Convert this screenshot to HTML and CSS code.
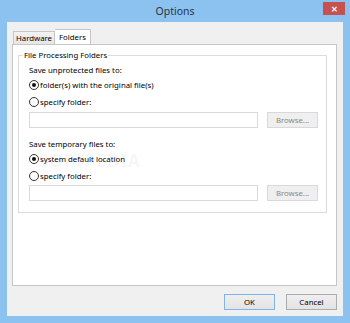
FILE: index.html
```html
<!DOCTYPE html>
<html>
<head>
    <title>Options</title>
    <link rel="stylesheet" href="styles.css">
</head>
<body>
    <div class="window">
        <div class="titlebar">
            <span class="title">Options</span>
            <span class="close">&#x2715;</span>
        </div>
        <div class="client">
            <div class="tabs">
                <div class="tab">Hardware</div>
                <div class="tab active">Folders</div>
            </div>
            <div class="panel">
                <fieldset class="group">
                    <legend>File Processing Folders</legend>
                    <div class="label">Save unprotected files to:</div>
                    <div class="radio"><span class="dot checked"></span>folder(s) with the original file(s)</div>
                    <div class="radio"><span class="dot"></span>specify folder:</div>
                    <div class="pathrow">
                        <div class="textbox"></div>
                        <div class="browse">Browse...</div>
                    </div>
                    <div class="label second">Save temporary files to:</div>
                    <div class="radio"><span class="dot checked"></span>system default location</div>
                    <div class="radio"><span class="dot"></span>specify folder:</div>
                    <div class="pathrow last">
                        <div class="textbox"></div>
                        <div class="browse">Browse...</div>
                    </div>
                </fieldset>
                <div class="watermark">SOFTPEDIA</div>
            </div>
            <div class="buttons">
                <div class="button default">OK</div>
                <div class="button">Cancel</div>
            </div>
        </div>
    </div>
</body>
</html>
```
FILE: styles.css
```css
body {
    margin: 0;
    font-family: 'Noto Sans', 'Open Sans', sans-serif;
    font-size: 7.8px;
    color: #000;
}

.window {
    width: 350px;
    height: 323px;
    box-sizing: border-box;
    background-color: #8cc2f0;
    padding: 0 7px 7px 7px;
    display: flex;
    flex-direction: column;
}

.titlebar {
    position: relative;
    height: 22px;
    display: flex;
    align-items: center;
    justify-content: center;
}

.title {
    font-size: 10.5px;
    color: #2b3543;
    margin-top: -1px;
}

.close {
    position: absolute;
    right: -2px;
    top: 2px;
    width: 22px;
    height: 13px;
    background-color: #c75050;
    color: #fff;
    font-size: 8px;
    font-weight: bold;
    display: flex;
    align-items: center;
    justify-content: center;
}

.client {
    flex: 1;
    background-color: #f0f0f0;
    padding: 7px 6px 5px 5px;
    display: flex;
    flex-direction: column;
}

.tabs {
    display: flex;
    align-items: flex-end;
    height: 15px;
    padding-left: 1px;
}

.tab {
    width: 40px;
    height: 12px;
    line-height: 12px;
    text-align: center;
    border: 1px solid #c6c6c6;
    border-bottom: none;
    background: linear-gradient(#f2f2f2, #e6e6e6);
}

.tab.active {
    width: 35px;
    height: 15px;
    line-height: 14px;
    background: #fff;
    border-left: none;
    margin-bottom: -1px;
    position: relative;
}

.panel {
    position: relative;
    height: 242px;
    box-sizing: border-box;
    background-color: #fff;
    border: 1px solid #c6c6c6;
    padding: 4px 9px 0 5px;
}

.group {
    margin: 0;
    border: 1px solid #dcdcdc;
    padding: 3px 8px 11px 10px;
}

.group legend {
    margin-left: -6px;
    padding: 0 1px;
    line-height: 12px;
}

.label {
    height: 12px;
    line-height: 12px;
}

.label.second {
    margin-top: 10px;
}

.radio {
    height: 17px;
    display: flex;
    align-items: center;
}

.dot {
    width: 8px;
    height: 8px;
    border: 1px solid #333;
    border-radius: 50%;
    background: #fff;
    margin-right: 1px;
    display: flex;
    align-items: center;
    justify-content: center;
}

.dot.checked::after {
    content: "";
    width: 4px;
    height: 4px;
    border-radius: 50%;
    background: #111;
}

.pathrow {
    display: flex;
    gap: 9px;
    margin-top: 2px;
}

.pathrow.last {
    margin-top: 1px;
}

.textbox {
    flex: 1;
    height: 14px;
    border: 1px solid #dadada;
    background: #fff;
}

.browse {
    width: 49px;
    height: 14px;
    line-height: 14px;
    text-align: center;
    border: 1px solid #d9d9d9;
    background: #efefef;
    color: #8a8a8a;
}

.watermark {
    position: absolute;
    left: 26px;
    top: 104px;
    font-size: 17px;
    font-weight: bold;
    letter-spacing: 1px;
    color: rgba(120, 120, 120, 0.08);
}

.buttons {
    display: flex;
    justify-content: flex-end;
    gap: 11px;
    margin-top: 8px;
}

.button {
    width: 49px;
    height: 14px;
    line-height: 14px;
    text-align: center;
    border: 1px solid #acacac;
    background: linear-gradient(#efefef, #e3e3e3);
}

.button.default {
    border-color: #7eb4ea;
}
```
